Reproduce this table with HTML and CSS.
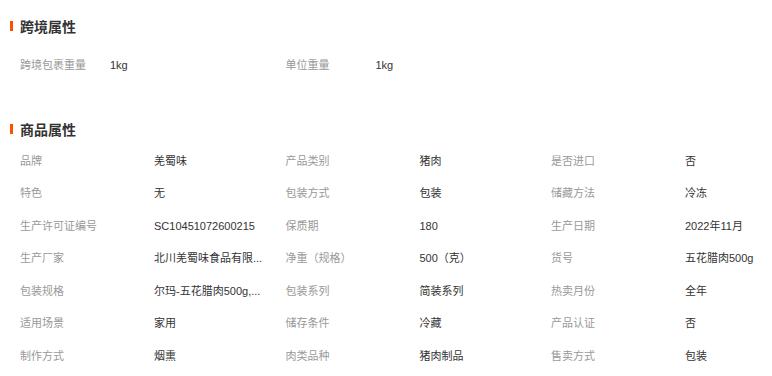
FILE: index.html
```html
<!DOCTYPE html>
<html lang="zh-CN">
<head>
<meta charset="utf-8">
<title>商品属性</title>
<link rel="stylesheet" href="styles.css">
</head>
<body>
<section class="section section-first">
  <h2 class="section-title"><span class="bar"></span>跨境属性</h2>
  <div class="grid grid-narrow">
    <div class="item"><span class="label">跨境包裹重量</span><span class="value">1kg</span></div>
    <div class="item"><span class="label">单位重量</span><span class="value">1kg</span></div>
  </div>
</section>
<section class="section section-second">
  <h2 class="section-title"><span class="bar"></span>商品属性</h2>
  <div class="grid grid-wide">
    <div class="item"><span class="label">品牌</span><span class="value">羌蜀味</span></div>
    <div class="item"><span class="label">产品类别</span><span class="value">猪肉</span></div>
    <div class="item"><span class="label">是否进口</span><span class="value">否</span></div>

    <div class="item"><span class="label">特色</span><span class="value">无</span></div>
    <div class="item"><span class="label">包装方式</span><span class="value">包装</span></div>
    <div class="item"><span class="label">储藏方法</span><span class="value">冷冻</span></div>

    <div class="item"><span class="label">生产许可证编号</span><span class="value">SC10451072600215</span></div>
    <div class="item"><span class="label">保质期</span><span class="value">180</span></div>
    <div class="item"><span class="label">生产日期</span><span class="value">2022年11月</span></div>

    <div class="item"><span class="label">生产厂家</span><span class="value" title="北川羌蜀味食品有限公司">北川羌蜀味食品有限...</span></div>
    <div class="item"><span class="label">净重（规格）</span><span class="value">500（克）</span></div>
    <div class="item"><span class="label">货号</span><span class="value">五花腊肉500g</span></div>

    <div class="item"><span class="label">包装规格</span><span class="value">尔玛-五花腊肉500g,...</span></div>
    <div class="item"><span class="label">包装系列</span><span class="value">简装系列</span></div>
    <div class="item"><span class="label">热卖月份</span><span class="value">全年</span></div>

    <div class="item"><span class="label">适用场景</span><span class="value">家用</span></div>
    <div class="item"><span class="label">储存条件</span><span class="value">冷藏</span></div>
    <div class="item"><span class="label">产品认证</span><span class="value">否</span></div>

    <div class="item"><span class="label">制作方式</span><span class="value">烟熏</span></div>
    <div class="item"><span class="label">肉类品种</span><span class="value">猪肉制品</span></div>
    <div class="item"><span class="label">售卖方式</span><span class="value">包装</span></div>
  </div>
</section>
</body>
</html>
```

FILE: styles.css
```css
html, body {
  margin: 0;
  padding: 0;
  background: #ffffff;
  overflow: hidden;
}

body {
  font-family: "Liberation Sans", "Noto Sans CJK SC", sans-serif;
  font-size: 11px;
  color: #333333;
}

.section-first {
  padding-top: 16px;
}

.section-second {
  padding-top: 37.5px;
}

.section-title {
  display: flex;
  align-items: center;
  height: 20px;
  margin: 0;
  font-size: 14px;
  font-weight: bold;
  line-height: 20px;
  color: #333333;
  font-family: "Noto Sans CJK SC", sans-serif;
}

.bar {
  width: 3px;
  height: 10px;
  margin-left: 10px;
  margin-right: 7px;
  background: #ff5000;
}

.grid {
  display: grid;
  grid-template-columns: 265.5px 265.5px 1fr;
  padding-left: 20px;
}

.section-first .grid {
  margin-top: 12.75px;
}

.section-second .grid {
  margin-top: 5.75px;
}

.item {
  display: flex;
  align-items: center;
  height: 32.5px;
  line-height: 20px;
  min-width: 0;
}

.label {
  flex: none;
  color: #999999;
  white-space: nowrap;
}

.grid-narrow .label {
  width: 90px;
}

.grid-wide .label {
  width: 134px;
}

.value {
  white-space: nowrap;
  color: #333333;
}
```
